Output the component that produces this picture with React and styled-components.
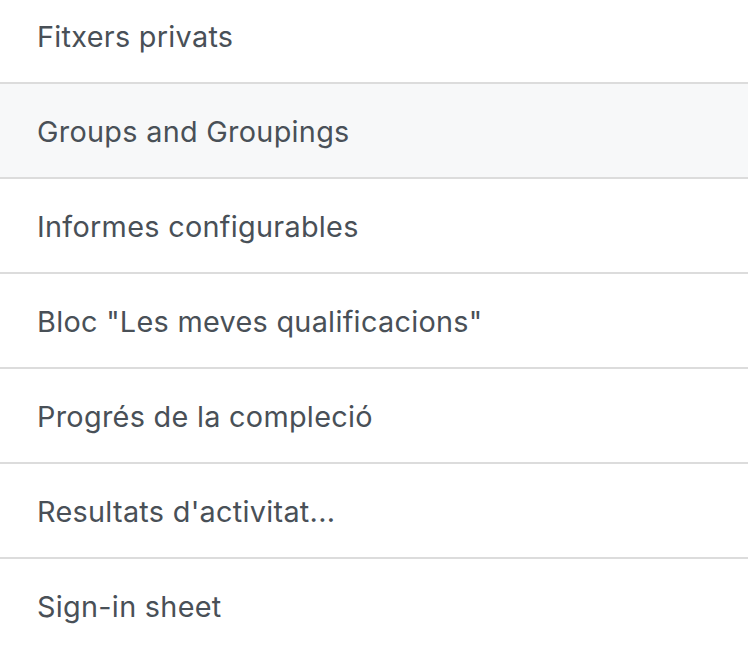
import React from "react";
import styled, { createGlobalStyle } from "styled-components";

const GlobalStyle = createGlobalStyle`
  html, body {
    margin: 0;
    padding: 0;
    background: #ffffff;
    overflow: hidden;
  }
  body {
    font-family: Inter, "Open Sans", Arial, sans-serif;
  }
`;

// list is scrolled a little, so the first row is cut at the top
const List = styled.ul`
  list-style: none;
  margin: -11px 0 0;
  padding: 0;
`;

const Item = styled.li`
  display: flex;
  align-items: center;
  box-sizing: border-box;
  height: 95px;
  padding: 1px 37px 0;
  border-bottom: 2px solid #dcdcdc;
  background: ${(p) => (p.$active ? "#f7f8f9" : "#ffffff")};
  color: #495057;
  font-size: 28.8px;
  letter-spacing: 0.3px;
  cursor: pointer;
`;

const items = [
  "Fitxers privats",
  "Groups and Groupings",
  "Informes configurables",
  'Bloc "Les meves qualificacions"',
  "Progrés de la compleció",
  "Resultats d'activitat...",
  "Sign-in sheet",
];

export default function App() {
  return (
    <>
      <GlobalStyle />
      <List>
        {items.map((label, i) => (
          <Item key={label} $active={i === 1}>
            {label}
          </Item>
        ))}
      </List>
    </>
  );
}
